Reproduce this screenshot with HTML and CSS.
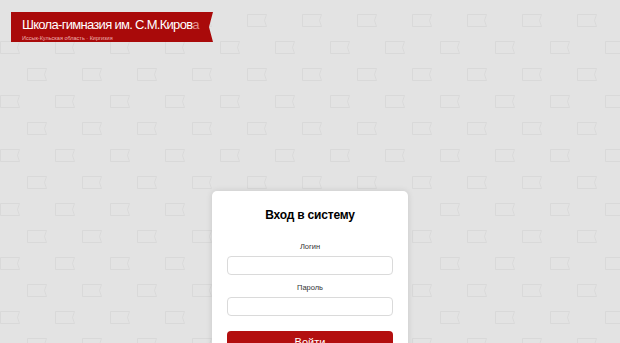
FILE: index.html
```html
<!DOCTYPE html>
<html lang="ru">
<head>
<meta charset="utf-8">
<title>Школа-гимназия им. С.М.Кирова</title>
<link rel="stylesheet" href="styles.css">
</head>
<body>
<header class="site-header">
  <div class="ribbon">
    <div class="ribbon-title">Школа-гимназия им. С.М.Киров<span class="fade">а</span></div>
    <div class="ribbon-sub">Иссык-Кульская область · Киргизия</div>
  </div>
</header>
<main class="page">
  <form class="login-card">
    <h1 class="login-title">Вход в систему</h1>
    <label class="field-label" for="login">Логин</label>
    <input class="field-input" id="login" type="text">
    <label class="field-label" for="pass">Пароль</label>
    <input class="field-input" id="pass" type="password">
    <button class="login-btn" type="button">Войти</button>
  </form>
</main>
</body>
</html>
```
FILE: styles.css
```css
html, body {
  margin: 0;
  padding: 0;
  height: 100%;
  overflow: hidden;
}
body {
  font-family: "Liberation Sans", Arial, sans-serif;
  background-color: #e3e3e3;
  background-image: url("data:image/svg+xml,%3Csvg xmlns='http://www.w3.org/2000/svg' width='55' height='54'%3E%3Cg fill='none' stroke='%23d9d9d9' stroke-width='1'%3E%3Cpath d='M27.5 14.5H46.5L44.5 20.5L46.5 26.5H27.5Z'/%3E%3Cpath d='M0.5 41.5H19.5L17.5 47.5L19.5 53.5H0.5Z'/%3E%3C/g%3E%3C/svg%3E");
  background-repeat: repeat;
}
.site-header {
  padding: 12px 0 0 11px;
}
.ribbon {
  width: 202px;
  height: 30px;
  box-sizing: border-box;
  background: #a90a0a;
  clip-path: polygon(0 0, 100% 0, 198px 15px, 100% 100%, 0 100%);
  padding: 5px 0 0 11px;
  color: #fff;
  overflow: hidden;
  white-space: nowrap;
}
.ribbon-title {
  font-size: 13px;
  line-height: 15px;
  letter-spacing: -0.7px;
  font-weight: normal;
}
.ribbon-title .fade {
  color: #e08c8c;
}
.ribbon-sub {
  font-size: 5.5px;
  line-height: 8px;
  color: #f0b5b5;
  margin-top: 2px;
}
.page {
  display: flex;
  justify-content: center;
  padding-top: 149px;
}
.login-card {
  width: 196px;
  box-sizing: border-box;
  background: #fff;
  border-radius: 5px;
  box-shadow: 0 0 6px rgba(0, 0, 0, 0.12);
  padding: 16px 15px 20px;
  display: flex;
  flex-direction: column;
}
.login-title {
  margin: 0;
  font-size: 12px;
  line-height: 16px;
  letter-spacing: -0.2px;
  font-weight: bold;
  text-align: center;
  color: #000;
}
.field-label {
  font-size: 7.5px;
  line-height: 10px;
  text-align: center;
  color: #333;
  margin-top: 19px;
}
.field-label + .field-input {
  margin-top: 4px;
}
.field-input + .field-label {
  margin-top: 8px;
}
.field-input {
  height: 19px;
  box-sizing: border-box;
  border: 1.5px solid #dadada;
  border-radius: 4px;
  background: #fff;
  padding: 0 6px;
  font-size: 10px;
  outline: none;
}
.login-btn {
  margin-top: 15px;
  height: 21px;
  border: none;
  border-radius: 4px;
  background: #b30f0f;
  color: #fff;
  font-family: "Liberation Sans", Arial, sans-serif;
  font-size: 11px;
  font-weight: normal;
  padding: 0;
}
```
